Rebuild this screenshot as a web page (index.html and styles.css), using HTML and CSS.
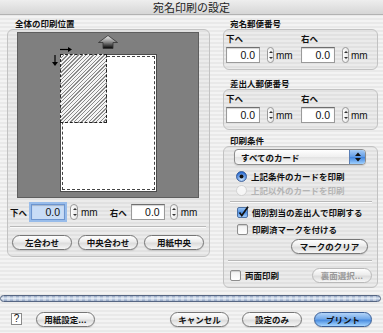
FILE: index.html
```html
<!DOCTYPE html>
<html lang="ja">
<head>
<meta charset="utf-8">
<title>宛名印刷の設定</title>
<link rel="stylesheet" href="styles.css">
</head>
<body>
<div class="window">
  <div class="titlebar">宛名印刷の設定</div>

  <div class="main">
    <!-- left: overall position -->
    <div class="col-left">
      <div class="group-label">全体の印刷位置</div>
      <div class="box box-position">
        <div class="canvas">
          <svg class="arrow-up" width="20" height="14" viewBox="0 0 20 14">
            <defs>
              <linearGradient id="ug" x1="0" y1="0" x2="0" y2="1">
                <stop offset="0" stop-color="#f2f2f2"/>
                <stop offset="0.5" stop-color="#8a8a8a"/>
                <stop offset="1" stop-color="#000"/>
              </linearGradient>
            </defs>
            <path d="M10 0.5 L19.5 7.5 L15 7.5 L15 13.5 L5 13.5 L5 7.5 L0.5 7.5 Z" fill="url(#ug)" stroke="#333" stroke-width="0.8"/>
          </svg>
          <svg class="arrow-right" width="12" height="5" viewBox="0 0 12 5">
            <path d="M0 2.5 H8" stroke="#000" stroke-width="1.2"/>
            <polygon points="8,0 12,2.5 8,5" fill="#000"/>
          </svg>
          <svg class="arrow-down" width="6" height="11" viewBox="0 0 6 11">
            <path d="M3 0 V7" stroke="#000" stroke-width="1.2"/>
            <polygon points="0,7 6,7 3,11" fill="#000"/>
          </svg>
          <div class="paper"><div class="paper-dash"></div></div>
          <div class="hatch"></div>
        </div>

        <div class="offset-row">
          <span class="lbl">下へ</span>
          <span class="field focus">0.0</span>
          <span class="stepper"><i class="up"></i><i class="down"></i></span>
          <span class="unit">mm</span>
          <span class="lbl lbl-right">右へ</span>
          <span class="field">0.0</span>
          <span class="stepper"><i class="up"></i><i class="down"></i></span>
          <span class="unit">mm</span>
        </div>
        <div class="hr"></div>
        <div class="btn-row">
          <button class="btn w60">左合わせ</button>
          <button class="btn w60">中央合わせ</button>
          <button class="btn w60">用紙中央</button>
        </div>
      </div>
    </div>

    <!-- right: postal codes and print conditions -->
    <div class="col-right">
      <div class="group-label right">宛名郵便番号</div>
      <div class="box box-zip">
        <div class="zip-grid">
          <div class="zip-col">
            <div class="lbl">下へ</div>
            <div class="zip-row">
              <span class="field">0.0</span>
              <span class="stepper"><i class="up"></i><i class="down"></i></span>
              <span class="unit">mm</span>
            </div>
          </div>
          <div class="zip-col">
            <div class="lbl">右へ</div>
            <div class="zip-row">
              <span class="field">0.0</span>
              <span class="stepper"><i class="up"></i><i class="down"></i></span>
              <span class="unit">mm</span>
            </div>
          </div>
        </div>
      </div>

      <div class="group-label right gap8">差出人郵便番号</div>
      <div class="box box-zip">
        <div class="zip-grid">
          <div class="zip-col">
            <div class="lbl">下へ</div>
            <div class="zip-row">
              <span class="field">0.0</span>
              <span class="stepper"><i class="up"></i><i class="down"></i></span>
              <span class="unit">mm</span>
            </div>
          </div>
          <div class="zip-col">
            <div class="lbl">右へ</div>
            <div class="zip-row">
              <span class="field">0.0</span>
              <span class="stepper"><i class="up"></i><i class="down"></i></span>
              <span class="unit">mm</span>
            </div>
          </div>
        </div>
      </div>

      <div class="group-label right gap5">印刷条件</div>
      <div class="box box-cond">
        <div class="popup">
          <span class="popup-text">すべてのカード</span>
          <span class="popup-cap">
            <svg width="6" height="10" viewBox="0 0 6 10">
              <polygon points="0,4 6,4 3,0.5" fill="#111"/>
              <polygon points="0,6 6,6 3,9.5" fill="#111"/>
            </svg>
          </span>
        </div>
        <div class="radio-row">
          <svg width="11" height="11" viewBox="0 0 11 11">
            <defs>
              <radialGradient id="rb" cx="50%" cy="75%" r="65%">
                <stop offset="0" stop-color="#cfe7ff"/>
                <stop offset="1" stop-color="#2c6dd2"/>
              </radialGradient>
            </defs>
            <circle cx="5.5" cy="5.5" r="5" fill="url(#rb)" stroke="#2b4f8a" stroke-width="0.8"/>
            <circle cx="5.5" cy="5.5" r="2" fill="#111"/>
          </svg>
          <span class="opt">上記条件のカードを印刷</span>
        </div>
        <div class="radio-row disabled">
          <svg width="11" height="11" viewBox="0 0 11 11">
            <circle cx="5.5" cy="5.5" r="5" fill="#f6f6f6" stroke="#cccccc" stroke-width="0.8"/>
          </svg>
          <span class="opt">上記以外のカードを印刷</span>
        </div>
        <div class="hr hr-cond"></div>
        <div class="check-row first">
          <svg width="12" height="12" viewBox="0 0 12 12">
            <defs>
              <linearGradient id="cb" x1="0" y1="0" x2="0" y2="1">
                <stop offset="0" stop-color="#9fc9f7"/>
                <stop offset="0.5" stop-color="#4f8fe2"/>
                <stop offset="1" stop-color="#a8d2ff"/>
              </linearGradient>
            </defs>
            <rect x="0.5" y="1.5" width="10" height="10" rx="1.5" fill="url(#cb)" stroke="#34598f" stroke-width="0.8"/>
            <path d="M2.5 6.5 L4.8 9.5 L11 0.8" fill="none" stroke="#111" stroke-width="1.7"/>
          </svg>
          <span class="opt">個別割当の差出人で印刷する</span>
        </div>
        <div class="check-row">
          <span class="checkbox"></span>
          <span class="opt">印刷済マークを付ける</span>
        </div>
        <div class="btn-right">
          <button class="btn w77">マークのクリア</button>
        </div>
        <div class="hr hr-cond2"></div>
        <div class="duplex-row">
          <span class="checkbox"></span>
          <span class="opt">両面印刷</span>
          <button class="btn w60 disabled">裏面選択...</button>
        </div>
      </div>
    </div>
  </div>

  <div class="bar"></div>

  <div class="footer">
    <span class="help">?</span>
    <button class="btn w59 paper-btn">用紙設定...</button>
    <button class="btn w59 cancel-btn">キャンセル</button>
    <button class="btn w60 only-btn">設定のみ</button>
    <button class="btn w58 default-btn">プリント</button>
  </div>
</div>
</body>
</html>
```

FILE: styles.css
```css
*{
    margin: 0;
    padding: 0;
    box-sizing: border-box;
}
body{
    width: 383px;
    height: 333px;
    overflow: hidden;
    font-family: "Noto Sans CJK JP", sans-serif;
    color: #111;
}
.window{
    width: 383px;
    height: 333px;
    background: repeating-linear-gradient(#f3f3f3 0 2px, #e9e9e9 2px 4px);
}
.titlebar{
    height: 15px;
    line-height: 15px;
    text-align: center;
    font-size: 11px;
    color: #222;
    background: linear-gradient(#eeeeee, #d6d6d6);
    border-bottom: 1px solid #b2b2b2;
}
.main{
    display: flex;
    gap: 13px;
    padding: 3px 0 0 7px;
}
.col-left{
    width: 203px;
}
.col-right{
    width: 155px;
}
.group-label{
    height: 11px;
    line-height: 11px;
    font-size: 8.5px;
    font-weight: bold;
    padding-left: 8px;
}
.group-label.right{
    padding-left: 7px;
}
.gap8{
    margin-top: 8px;
}
.gap5{
    margin-top: 5px;
}
.box{
    border: 1px solid #c2c2c2;
    border-radius: 6px;
    background: rgba(0, 0, 0, 0.03);
}
.box-position{
    height: 228px;
}

/* preview canvas */
.canvas{
    position: relative;
    margin: 2px 0 0 9px;
    width: 182px;
    height: 166px;
    background: #7f7f7f;
    border: 1px solid #5e5e5e;
}
.arrow-up{
    position: absolute;
    left: 80px;
    top: 2px;
}
.arrow-right{
    position: absolute;
    left: 42px;
    top: 14px;
}
.arrow-down{
    position: absolute;
    left: 34px;
    top: 22px;
}
.paper{
    position: absolute;
    left: 42px;
    top: 21px;
    width: 97px;
    height: 138px;
    background: #fff;
    border: 1px solid #4a4a4a;
}
.paper-dash{
    position: absolute;
    left: 1px;
    top: 1px;
    right: 1px;
    bottom: 1px;
    border: 1px dashed #444;
}
.hatch{
    position: absolute;
    left: 42px;
    top: 21px;
    width: 47px;
    height: 69px;
    border: 1px dashed #222;
    background: repeating-linear-gradient(135deg, #f4f4f4 0 1.6px, #8a8a8a 1.6px 2.6px);
}

/* numeric fields */
.offset-row{
    display: flex;
    align-items: center;
    height: 16px;
    margin-top: 6px;
    padding-left: 2px;
}
.lbl{
    font-size: 8.5px;
    font-weight: bold;
    line-height: 11px;
    height: 11px;
}
.offset-row .lbl{
    width: 18px;
    margin-right: 3px;
}
.offset-row .lbl-right{
    margin-left: 12px;
}
.field{
    display: block;
    width: 34px;
    height: 16px;
    border: 1px solid #9a9a9a;
    border-top-color: #6f6f6f;
    background: #fff;
    box-shadow: inset 0 1px 1px rgba(0, 0, 0, 0.18);
    text-align: right;
    padding-right: 4px;
    line-height: 14px;
    font-family: "Liberation Sans", sans-serif;
    font-size: 10.5px;
}
.field.focus{
    background: #c8dcf6;
    border-color: #6d95cf;
    outline: 2px solid #98bcea;
}
.stepper{
    position: relative;
    display: block;
    width: 8px;
    height: 16px;
    margin-left: 5px;
    border: 1px solid #9a9a9a;
    border-radius: 4px;
    background: linear-gradient(90deg, #fdfdfd, #e6e6e6);
}
.stepper i{
    position: absolute;
    left: 1.5px;
    width: 0;
    height: 0;
    border-left: 2px solid transparent;
    border-right: 2px solid transparent;
}
.stepper .up{
    top: 3px;
    border-bottom: 2px solid #333;
}
.stepper .down{
    bottom: 3px;
    border-top: 2px solid #333;
}
.unit{
    margin-left: 3px;
    font-family: "Liberation Sans", sans-serif;
    font-size: 10px;
}
.hr{
    height: 2px;
    border-top: 1px solid #b8b8b8;
    border-bottom: 1px solid #fafafa;
    margin: 6px 3px 0 2px;
}
.btn-row{
    display: flex;
    gap: 6px;
    margin-top: 7px;
    padding-left: 4px;
}

/* aqua buttons */
.btn{
    display: block;
    height: 15px;
    border: 1px solid #767676;
    border-radius: 8px;
    background: linear-gradient(#fefefe, #ececec 45%, #dcdcdc 55%, #f6f6f6);
    font-family: "Noto Sans CJK JP", sans-serif;
    font-size: 8.5px;
    font-weight: bold;
    line-height: 13px;
    color: #111;
    text-align: center;
    box-shadow: 0 1px 1px rgba(0, 0, 0, 0.12);
}
.w58{ width: 58px; }
.w59{ width: 59px; }
.w60{ width: 60px; }
.w77{ width: 77px; }
.btn.disabled{
    color: #9a9a9a;
    border-color: #b9b9b9;
    box-shadow: none;
}

/* zip boxes */
.box-zip{
    height: 41px;
    padding: 3px 0 0 2px;
}
.zip-grid{
    display: flex;
}
.zip-col{
    width: 75px;
}
.zip-row{
    display: flex;
    align-items: center;
    margin-top: 3px;
}
.zip-row .stepper{
    margin-left: 7px;
    width: 7px;
}
.zip-row .stepper i{
    left: 1px;
}
.zip-row .unit{
    margin-left: 2px;
}

/* print conditions */
.box-cond{
    height: 142px;
    padding-top: 2px;
}
.popup{
    display: flex;
    width: 132px;
    height: 16px;
    margin-left: 10px;
    border: 1px solid #8c8c8c;
    border-radius: 4px;
    overflow: hidden;
    background: linear-gradient(#ffffff, #efefef 50%, #e2e2e2 51%, #f7f7f7);
    box-shadow: 0 1px 1px rgba(0, 0, 0, 0.12);
}
.popup-text{
    flex: 1;
    padding-left: 6px;
    font-size: 8.5px;
    font-weight: bold;
    line-height: 14px;
}
.popup-cap{
    display: flex;
    align-items: center;
    justify-content: center;
    width: 16px;
    border-left: 1px solid #5a7fb6;
    background: linear-gradient(#a9cdf5, #5f9ae5 50%, #3f83dc 51%, #9fd0ff);
}
.radio-row{
    display: flex;
    align-items: center;
    height: 14px;
    padding-left: 12px;
}
.popup + .radio-row{
    margin-top: 4px;
}
.opt{
    margin-left: 4px;
    font-size: 8.5px;
    font-weight: bold;
    line-height: 11px;
}
.disabled .opt{
    color: #b4b4b4;
}
.hr-cond{
    margin: 4px 5px 0 6px;
}
.check-row{
    display: flex;
    align-items: center;
    height: 14px;
    margin-top: 3px;
    padding-left: 13px;
}
.check-row.first{
    margin-top: 2px;
}
.check-row.first .opt{
    margin-left: 3px;
}
.checkbox{
    display: block;
    width: 11px;
    height: 11px;
    border: 1px solid #8e8e8e;
    border-radius: 2px;
    background: linear-gradient(#f0f0f0, #ffffff);
    box-shadow: inset 0 1px 1px rgba(0, 0, 0, 0.15);
}
.btn-right{
    display: flex;
    justify-content: flex-end;
    margin-top: 3px;
    padding-right: 9px;
}
.hr-cond2{
    margin: 6px 5px 0 4px;
}
.duplex-row{
    display: flex;
    align-items: center;
    height: 15px;
    margin-top: 6px;
    padding-left: 6px;
}
.duplex-row .btn{
    margin-left: auto;
    margin-right: 5px;
}

/* bottom separator and buttons */
.bar{
    height: 7px;
    margin: 7px 2px 0 0;
    border: 1px solid #566683;
    border-radius: 4px;
    background: repeating-linear-gradient(90deg, rgba(255, 255, 255, 0.35) 0 3px, rgba(255, 255, 255, 0) 3px 6px),
        linear-gradient(#8a9cba, #dde7f4 45%, #c4d2e7 60%, #8c9fbd);
}
.footer{
    display: flex;
    align-items: center;
    height: 14px;
    margin-top: 10px;
    padding-left: 11px;
}
.help{
    display: block;
    width: 11px;
    height: 12px;
    border: 1px solid #8a8a8a;
    background: #fff;
    font-family: "Liberation Sans", sans-serif;
    font-size: 10px;
    line-height: 10px;
    text-align: center;
}
.paper-btn{
    margin-left: 14px;
}
.cancel-btn{
    margin-left: 75px;
}
.only-btn{
    margin-left: 13px;
}
.default-btn{
    margin-left: 12px;
    border-color: #3b5f97;
    background: linear-gradient(#b3d4f8, #74aaea 45%, #4b8de0 55%, #a6d6ff);
}
```
